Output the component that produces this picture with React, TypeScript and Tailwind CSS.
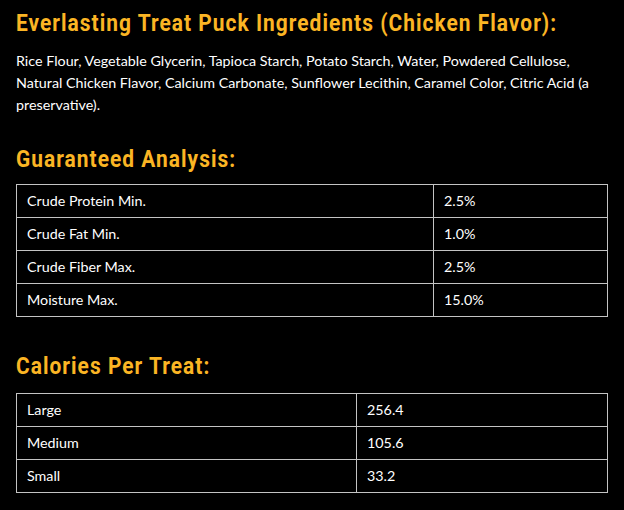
const analysis = [
  { label: "Crude Protein Min.", value: "2.5%" },
  { label: "Crude Fat Min.", value: "1.0%" },
  { label: "Crude Fiber Max.", value: "2.5%" },
  { label: "Moisture Max.", value: "15.0%" },
];

const calories = [
  { label: "Large", value: "256.4" },
  { label: "Medium", value: "105.6" },
  { label: "Small", value: "33.2" },
];

// no condensed face installed, so squeeze Roboto bold horizontally
function Heading({ children }: { children: React.ReactNode }) {
  return (
    <h2 className="h-[32px] whitespace-nowrap font-['Roboto',sans-serif] text-[24px] leading-[32px] font-bold text-[#fbb524]">
      <span className="inline-block origin-left scale-x-[0.87] tracking-[1.2px]">
        {children}
      </span>
    </h2>
  );
}

function InfoTable({
  rows,
  firstCol,
}: {
  rows: { label: string; value: string }[];
  firstCol: string;
}) {
  return (
    <table className="w-full table-fixed border-collapse">
      <colgroup>
        <col className={firstCol} />
        <col />
      </colgroup>
      <tbody>
        {rows.map((row) => (
          <tr key={row.label} className="h-[33px]">
            <td className="border border-[#c4c4c4] px-[10px] py-0 align-middle">
              {row.label}
            </td>
            <td className="border border-[#c4c4c4] px-[10px] py-0 align-middle">
              {row.value}
            </td>
          </tr>
        ))}
      </tbody>
    </table>
  );
}

export default function App() {
  return (
    <div className="min-h-screen bg-black px-4 pt-[7px] pb-4 text-white font-['Lato',sans-serif] text-[14.3px] leading-[22px]">
      <Heading>Everlasting Treat Puck Ingredients (Chicken Flavor):</Heading>
      <p className="mt-[11px]">
        Rice Flour, Vegetable Glycerin, Tapioca Starch, Potato Starch, Water,
        Powdered Cellulose, Natural Chicken Flavor, Calcium Carbonate, Sunflower
        Lecithin, Caramel Color, Citric Acid (a preservative).
      </p>

      <div className="mt-[27px]">
        <Heading>Guaranteed Analysis:</Heading>
      </div>
      <div className="mt-[9px]">
        <InfoTable rows={analysis} firstCol="w-[417px]" />
      </div>

      <div className="mt-[33px]">
        <Heading>Calories Per Treat:</Heading>
      </div>
      <div className="mt-[11px]">
        <InfoTable rows={calories} firstCol="w-[340px]" />
      </div>
    </div>
  );
}
